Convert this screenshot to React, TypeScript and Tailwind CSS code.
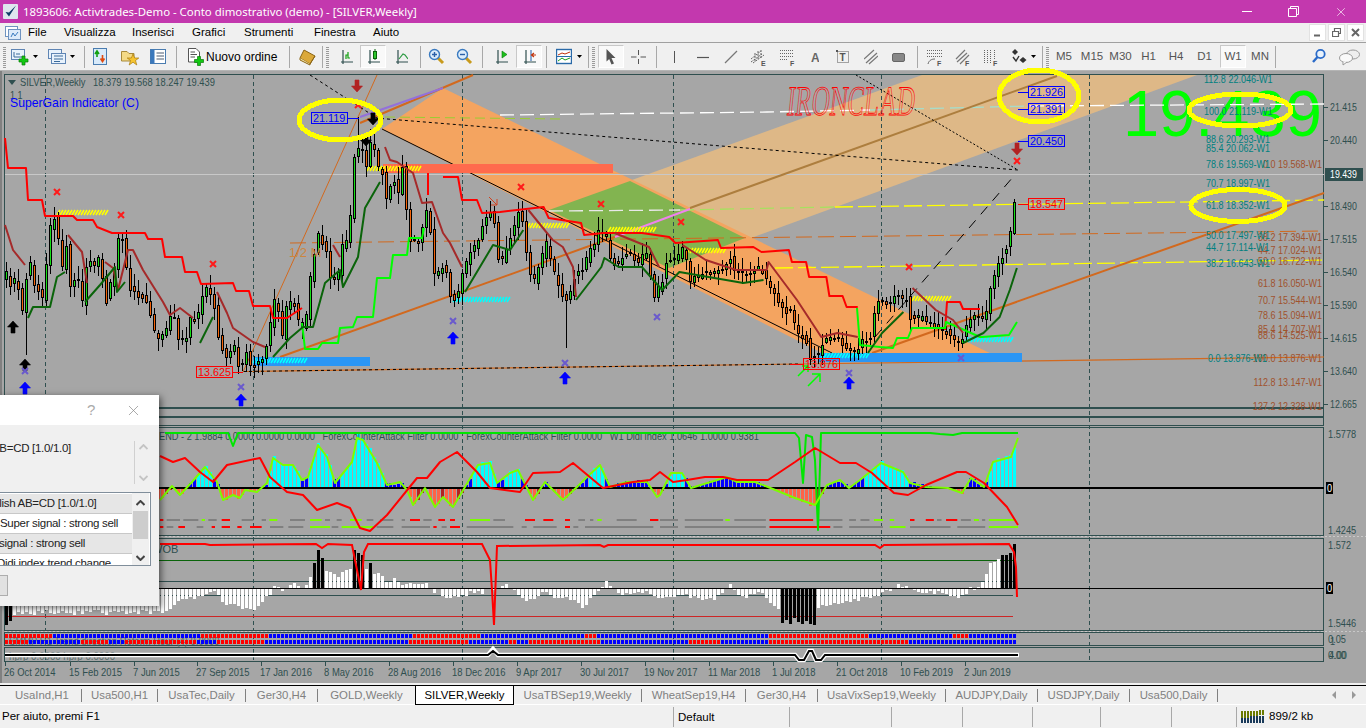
import { ReactNode } from "react";
import { X } from "lucide-react";

// ---- chart data helpers ----
let seed = 4711;
const rnd = () => {
  seed = (seed * 16807) % 2147483647;
  return seed / 2147483647;
};
const pts = (s: string) =>
  s
    .trim()
    .split(/\s+/)
    .map((p) => p.split(",").map(Number));
const at = (list: number[][], x: number) => {
  if (x <= list[0][0]) return list[0][1];
  for (let i = 1; i < list.length; i++) {
    if (x <= list[i][0]) {
      const [x0, y0] = list[i - 1];
      const [x1, y1] = list[i];
      return y0 + ((y1 - y0) * (x - x0)) / (x1 - x0);
    }
  }
  return list[list.length - 1][1];
};
// points right of 500 were read off a slightly squeezed crop
const fix = (s: string) =>
  pts(s)
    .map(([x, y]) => `${x > 500 ? 500 + (x - 500) * 1.0135 : x},${y}`)
    .join(" ");

const barXs = Array.from({ length: 253 }, (_, i) => 6 + i * 4);

const closePath = pts(`5,270 9,287 13,280 17,280 22,310 25,283 29,257 33,283 37,288 42,298 45,277 49,233 53,213 57,230 62,267 66,247 70,283 73,283 77,272 82,303 86,267 89,260 93,267 98,260 102,278 106,300 109,287 113,277 117,240 122,237 126,267 129,287 133,292 141,297 145,300 149,307 153,330 157,337 165,333 169,317 173,313 177,340 185,340 189,320 197,317 201,297 205,288 213,300 217,333 221,350 229,357 233,342 237,363 241,367 245,347 249,367 257,365 265,352 269,332 273,302 277,302 282,337 286,308 293,300 297,320 301,325 305,327 309,285 313,260 317,230 321,242 325,243 329,275 333,277 337,283 341,247 345,245 349,233 353,163 357,148 361,143 365,170 369,145 373,145 377,170 381,165 385,202 389,190 393,177 397,197 402,167 405,197 409,240 413,243 417,243 421,233 425,210 429,217 433,273 437,275 441,267 445,262 449,297 457,297 461,277 465,267 469,255 477,242 481,227 489,212 493,212 497,257 503,260 510,235 520,207 529,270 534,280 546,243 552,267 564,300 569,297 574,277 581,270 598,233 605,233 610,257 617,267 627,250 639,263 645,250 650,277 654,297 662,280 666,262 677,257 684,247 689,280 703,273 716,273 730,257 735,273 750,273 760,267 770,287 780,308 790,312 797,333 806,340 809,357 818,353 823,340 838,337 848,353 858,350 861,340 870,338 873,313 877,303 888,303 893,297 909,297 910,318 922,317 936,327 949,333 956,343 961,340 966,327 973,317 985,318 990,287 1000,260 1008,243 1013,212 1017,175`);

const candles = barXs.map((x, i) => {
  const c = Math.round(at(closePath, x) + (rnd() - 0.5) * 6);
  const o = i === 0 ? c + 8 : Math.round(at(closePath, x - 4) + (rnd() - 0.5) * 6);
  let hi = Math.round(Math.min(o, c) - 2 - rnd() * 11);
  let lo = Math.round(Math.max(o, c) + 2 + rnd() * 11);
  if (x === 26) lo = 355;
  if (x === 358) hi = 117;
  if (x === 566) lo = 348;
  if (x === 1018) hi = 171;
  return { x, o, c, hi, lo };
});

const limeLine = `160,500 172,486 180,495 192,482 205,467 217,482 223,500 233,495 240,498 245,490 257,492 267,483 273,458 283,465 293,465 302,480 308,477 318,445 327,457 335,483 352,462 357,438 363,440 377,463 387,485 400,482 407,490 413,505 425,488 435,507 443,497 453,507 462,492 478,465 490,463 497,483 510,473 518,470 533,500 545,482 563,500 577,487 587,477 600,465 610,487 627,482 647,482 657,497 660,495 671,473 682,473 691,488 727,477 737,482 755,482 768,487 795,498 815,505 827,485 840,480 849,488 860,480 881,463 903,472 910,483 926,487 948,488 962,493 971,478 984,487 993,462 1011,457 1018,438`;
const redLine = `160,456 173,462 185,458 200,472 213,482 227,465 260,458 270,477 287,492 303,495 317,510 337,503 350,508 360,528 370,531 387,515 417,478 427,478 440,462 457,452 477,472 490,488 520,492 533,473 560,472 573,463 603,488 633,482 650,480 660,472 673,482 687,480 705,477 723,477 737,480 768,480 795,462 815,448 840,463 856,463 872,473 894,493 908,495 926,485 957,472 966,472 984,483 1007,507 1018,525`;
const limeList = pts(limeLine);

const macdBars = barXs.map((x, i) => {
  const h = 487 - at(limeList, x);
  const prev = 487 - at(limeList, x - 4);
  const v = Math.round(h * 1.05 + (rnd() - 0.5) * 3);
  const color = v >= 0 ? (v > 9 ? "#00ffff" : "#0000ff") : h > prev + 2.5 ? "#b22222" : "#ff6347";
  return { x, v: i < 38 ? 0 : v, color };
});

const volPath = pts(`4,-25 160,-24 170,-22 180,-10 195,-12 205,-8 215,-4 225,-15 240,-20 255,-20 265,-12 272,-3 276,6 282,-5 288,3 296,4 304,2 308,5 316,18 330,18 336,12 345,16 360,18 375,15 385,8 395,8 405,3 420,2 425,6 430,-2 440,-4 450,-12 460,-8 470,-4 480,-5 490,-1 495,-2 505,3 515,-3 525,-15 535,-8 545,-4 555,-12 565,-10 575,-15 585,-20 590,-10 600,-2 605,8 613,-1 620,-8 630,-5 640,-3 650,-5 660,-14 665,-10 680,-5 690,-10 700,-10 710,-12 720,-8 730,3 740,-10 750,-8 760,-3 770,-15 778,-22 820,-20 835,-15 850,-14 870,-10 885,-3 900,3 912,-1 925,-5 945,-5 955,-10 965,-4 975,1 985,9 990,25 998,30`);
const blackBars: Record<number, number> = { 6: -37, 10: -33, 314: 25, 318: 38, 322: 30, 354: 38, 358: 35, 362: 33, 370: 25, 1002: 33, 1006: 33, 1010: 35, 1014: 44 };
const volBars = barXs.map((x) => {
  if (blackBars[x]) return { x, v: blackBars[x], black: true };
  if (x >= 782 && x <= 814) return { x, v: Math.round(-30 - rnd() * 8), black: true };
  return { x, v: Math.round(at(volPath, x) + (rnd() - 0.5) * 5), black: false };
});

const rowTop = "4,r 52,b 200,r 268,b 411,r 479,b 585,r 597,b 768,r 870,b 953,r 970,b";
const rowBottom = "4,r 27,b 80,r 108,b 125,r 195,b 215,r 263,b 407,r 467,b 507,r 517,b 527,r 600,b 687,r 722,b 768,r 907,b 964,b";
const blockColor = (row: string, x: number) => {
  const parts = row.split(" ").map((p) => p.split(","));
  let c = "r";
  parts.forEach(([px, pc]) => {
    if (x >= Number(px)) c = pc;
  });
  return c === "r" ? "#ff0000" : "#0000ff";
};

// indicator strips: [from, to, colour] taken from two crops with own offsets
const strip = (s: string, scale: number, off: number) =>
  s.split(" ").map((p) => {
    const [a, b, c] = p.split(",");
    return { a: Number(a) / scale + off, b: Number(b) / scale + off, c: c === "r" ? "#ff0000" : c === "l" ? "#7cfc00" : "#808080" };
  });
const stripA = [
  ...strip("0,10,r 20,60,g 70,115,g 125,135,l 145,170,g 185,210,r 245,280,g 305,318,g 328,352,l 390,435,g 450,485,l 495,510,g 530,545,g 570,605,l 620,640,g 660,700,g 725,735,g 750,780,r 790,815,g 835,855,r 870,885,r 930,990,l 1000,1035,g 1095,1125,r 1150,1180,r 1215,1230,r 1255,1275,g 1290,1300,g 1312,1325,l 1370,1430,g 1470,1495,r", 3, 160),
  ...strip("0,40,g 55,140,g 145,155,l 165,235,g 243,340,r 350,405,g 420,435,g 445,465,g 475,495,l 510,520,l 555,565,r 590,608,r 615,625,g 635,660,r 668,690,g 697,708,l 715,722,g 730,790,l", 2.22, 660),
];
const stripB = [
  ...strip("0,10,r 20,40,g 55,75,r 110,130,g 155,165,r 185,210,r 232,245,r 270,305,r 330,370,g 385,430,g 450,510,l 515,535,g 545,640,l 650,700,g 725,810,g 820,830,r 845,860,g 870,900,r 920,1060,g 1085,1100,g 1120,1190,g 1215,1230,r 1240,1255,g 1275,1480,g", 3, 160),
  ...strip("0,40,g 55,235,g 243,378,r 385,405,g 420,495,g 510,545,l 555,645,g 660,722,g 730,795,l", 2.22, 660),
];

const fibLeft = [
  ["112.8 22.046-W1", 1204, 83],
  ["100.0 21.119-W1", 1204, 115],
  ["88.6 20.293-W1", 1206, 143],
  ["85.4 20.062-W1", 1206, 152],
  ["78.6 19.569-W1", 1206, 168],
  ["70.7 18.997-W1", 1206, 187],
  ["61.8 18.352-W1", 1206, 209],
  ["50.0 17.497-W1", 1206, 239],
  ["44.7 17.114-W1", 1206, 251],
  ["38.2 16.643-W1", 1206, 267],
  ["0.0 13.876-W1", 1208, 362],
] as const;
const fibRight = [
  ["0.0 19.568-W1", 168],
  ["38.2 17.394-W1", 241],
  ["44.7 17.024-W1", 254],
  ["50.0 16.722-W1", 265],
  ["61.8 16.050-W1", 287],
  ["70.7 15.544-W1", 304],
  ["78.6 15.094-W1", 319],
  ["85.4 14.707-W1", 333],
  ["88.6 14.525-W1", 339],
  ["100.0 13.876-W1", 362],
  ["112.8 13.147-W1", 386],
  ["127.2 12.328-W1", 410],
] as const;
const priceAxis = [
  ["21.415", 107],
  ["20.440", 140],
  ["18.490", 206],
  ["17.515", 239],
  ["16.540", 272],
  ["15.590", 305],
  ["14.615", 338],
  ["13.640", 371],
  ["12.665", 404],
] as const;
const dates = [
  ["26 Oct 2014", 4],
  ["15 Feb 2015", 69],
  ["7 Jun 2015", 133],
  ["27 Sep 2015", 196],
  ["17 Jan 2016", 260],
  ["8 May 2016", 324],
  ["28 Aug 2016", 388],
  ["18 Dec 2016", 452],
  ["9 Apr 2017", 516],
  ["30 Jul 2017", 580],
  ["19 Nov 2017", 644],
  ["11 Mar 2018", 708],
  ["1 Jul 2018", 772],
  ["21 Oct 2018", 836],
  ["10 Feb 2019", 900],
  ["2 Jun 2019", 964],
] as const;
const grid = [45, 253, 462, 673, 881, 1089];

const SLATE = "#2f4f4f";

function Tx({ x, y, s = 0.84, size = 11, fill = SLATE, anchor, children }: { x: number; y: number; s?: number; size?: number; fill?: string; anchor?: "end"; children: ReactNode }) {
  return (
    <text transform={`translate(${x} ${y}) scale(${s} 1)`} fontSize={size} fill={fill} textAnchor={anchor}>
      {children}
    </text>
  );
}

function Arrow({ x, y, color, down = false }: { x: number; y: number; color: string; down?: boolean }) {
  return (
    <path
      d="M0 -6 L5.5 0 L2 0 L2 6 L-2 6 L-2 0 L-5.5 0 Z"
      fill={color}
      stroke={color}
      strokeWidth="0.6"
      transform={`translate(${x} ${y}) ${down ? "rotate(180)" : ""}`}
    />
  );
}

function Cross({ x, y, color }: { x: number; y: number; color: string }) {
  return <path d={`M${x - 3} ${y - 3}L${x + 3} ${y + 3}M${x + 3} ${y - 3}L${x - 3} ${y + 3}`} stroke={color} strokeWidth="2" />;
}

function Hatch({ from, to, y, color }: { from: number; to: number; y: number; color: string }) {
  let d = "";
  for (let x = from; x < to; x += 3) d += `M${x} ${y + 5}L${x + 3} ${y}`;
  return <path d={d} stroke={color} strokeWidth="1.6" fill="none" />;
}

function PriceBox({ x, y, w, label, color, lineFrom, lineTo }: { x: number; y: number; w: number; label: string; color: string; lineFrom: number; lineTo: number }) {
  return (
    <g>
      <path d={`M${lineFrom} ${y + 6.5}H${lineTo}`} stroke={color} />
      <rect x={x + 0.5} y={y + 0.5} width={w} height={11} fill="none" stroke={color} />
      <Tx x={x + 2} y={y + 10} s={0.94} size={11.5} fill={color}>
        {label}
      </Tx>
    </g>
  );
}

function Chart() {
  return (
    <svg className="relative block overflow-visible" width="1366" height="612" viewBox="0 71 1366 612">
      <rect x="0" y="71" width="1366" height="612" fill="#a6a6a6" />
      <rect x="0" y="71" width="2" height="612" fill="#808080" />

      {/* channels */}
      <polygon points="549,210 922,75 1197,75 669,268" fill="#deb887" />
      <polygon points="382,129 443,88 1000,358 832,358" fill="#f4a460" />
      <polygon points="549,210 630,181 745,238 669,268" fill="#82b450" />

      {/* grid */}
      {grid.map((x) => (
        <path key={x} d={`M${x + 0.5} 75V660`} stroke={SLATE} strokeDasharray="4 3" />
      ))}

      {/* pane frames */}
      <g fill="none" stroke={SLATE}>
        <rect x="4.5" y="74.5" width="1319" height="333" />
        <rect x="4.5" y="408.5" width="1319" height="8" />
        <rect x="4.5" y="417.5" width="1319" height="8" />
        <rect x="4.5" y="427.5" width="1319" height="108" />
        <rect x="4.5" y="538.5" width="1319" height="92" />
        <rect x="4.5" y="632.5" width="1319" height="13" />
        <rect x="4.5" y="647.5" width="1319" height="14" />
      </g>
      <path d="M5 536.5H1366M5 631.5H1366" stroke="#c8c8c8" strokeDasharray="2 2" />

      {/* big price */}
      <text x="1123" y="136" fontSize="65" fill="#00ff00">
        19.439
      </text>

      {/* levels */}
      <path d="M5 174.5H1324" stroke="#c8c8c8" />
      <path d="M500 115L767 112L870 110" stroke="#fff" strokeWidth="1.3" strokeDasharray="14 6" fill="none" />
      <path d="M870 110L1030 106" stroke="#a8dcc8" strokeWidth="1.3" strokeDasharray="14 6" fill="none" />
      <path d="M1030 106L1324 104" stroke="#fff" strokeWidth="1.3" strokeDasharray="14 6" fill="none" />
      <path d="M385 117L560 119" stroke="#9acd32" strokeDasharray="10 5" fill="none" />
      <path d="M549 211L680 210" stroke="#e8e8e8" strokeWidth="1.3" strokeDasharray="14 6" fill="none" />
      <path d="M680 210L835 207" stroke="#a8e060" strokeWidth="1.3" strokeDasharray="14 6" fill="none" />
      <path d="M835 207L1324 200" stroke="#ffff00" strokeWidth="1.3" strokeDasharray="18 5" fill="none" />
      <path d="M775 268L1324 260" stroke="#ffff00" strokeWidth="1.3" strokeDasharray="18 5" fill="none" />
      <path d="M290 243L1324 231" stroke="#d2691e" strokeDasharray="16 6" fill="none" />
      <path d="M243 371.5L800 364L1324 357" stroke="#d2691e" fill="none" strokeWidth="1.2" />
      <path d="M243 371.5L800 364" stroke="#000" fill="none" strokeDasharray="3 3" />

      {/* trend lines */}
      <path d="M243 372L377 75" stroke="#d2691e" />
      <path d="M360 123L473 75" stroke="#d2691e" strokeWidth="2" />
      <path d="M360 117L443 88" stroke="#9370db" strokeWidth="2" />
      <path d="M280 357L620 235" stroke="#d2691e" strokeWidth="2" />
      <path d="M615 237L690 209" stroke="#ee82ee" strokeWidth="2" />
      <path d="M690 208L1057 76" stroke="#ad7e3e" strokeWidth="2" />
      <path d="M872 353L1324 193" stroke="#d2691e" strokeWidth="2" />
      <path d="M382 129L832 353" stroke="#000" />
      <path d="M310 75L380 120" stroke="#000" strokeDasharray="3 3" />
      <path d="M375 118L1018 170" stroke="#000" strokeDasharray="3 3" />
      <path d="M856 75L1018 170" stroke="#000" strokeDasharray="2 2" />
      <path d="M875 337L1013 177" stroke="#000" strokeDasharray="10 8" />

      {/* bars */}
      <rect x="383" y="164" width="230" height="9" fill="#ff6a4d" />
      <rect x="253" y="357" width="117" height="9" fill="#2a96f5" />
      <rect x="818" y="353" width="204" height="9" fill="#2a96f5" />
      <Hatch from={57} to={108} y={210} color="#ffff00" />
      <Hatch from={367} to={420} y={166} color="#ffff00" />
      <Hatch from={527} to={568} y={223} color="#ffff00" />
      <Hatch from={608} to={655} y={227} color="#ffff00" />
      <Hatch from={687} to={726} y={248} color="#ffff00" />
      <Hatch from={912} to={951} y={296} color="#ffff00" />
      <Hatch from={253} to={307} y={358} color="#00ffff" />
      <Hatch from={453} to={510} y={297} color="#00ffff" />
      <Hatch from={821} to={868} y={353} color="#00ffff" />
      <Hatch from={965} to={1012} y={337} color="#00ffff" />

      {/* candles */}
      <g shapeRendering="crispEdges">
        {candles.map((k) => (
          <g key={k.x}>
            <path d={`M${k.x + 0.5} ${k.hi}V${k.lo}`} stroke="#000" />
            <rect
              x={k.x - 0.5}
              y={Math.min(k.o, k.c) + 0.5}
              width="2"
              height={Math.max(Math.abs(k.o - k.c), 1)}
              fill={k.c < k.o ? "#18e018" : "#f4640a"}
              stroke="#000"
            />
          </g>
        ))}
      </g>

      {/* overlay lines */}
      <g fill="none" strokeLinejoin="round">
        <polyline
          stroke="#ff0000"
          strokeWidth="2"
          points={fix(
            "5,138 8,168 26,168 28,200 42,200 45,216 73,216 77,220 93,220 97,227 112,233 145,233 148,239 162,239 165,257 182,257 185,272 197,272 201,284 233,283 236,291 249,291 253,306 270,306 273,318 287,318 302,308"
          )}
        />
        <polyline stroke="#ff0000" strokeWidth="2" points="428,173 428,195" />
        <polyline stroke="#ff0000" strokeWidth="2" points={fix("443,177 458,177 462,200 477,200 482,213 500,212 543,207 548,218 580,223 583,235 602,233 640,233 667,237 673,243 715,240 718,248 750,247 758,252 785,250 788,262 802,262 805,277 822,277 825,296 838,296 842,307 853,307")} />
        <polyline stroke="#ff0000" strokeWidth="2" points="945,330 947,302 960,302 963,309 980,309" />
        <polyline
          stroke="#00ff00"
          strokeWidth="2"
          points="302,323 305,349 318,349 322,343 338,343 340,328 353,327 357,317 373,317 377,278 390,278 393,255 407,255 409,238 422,238 424,228"
        />
        <polyline stroke="#00ff00" strokeWidth="2" points="857,308 860,345 880,347 893,348 897,338 908,338 912,328 945,328 946,322 980,337 982,337 1009,335 1017,322" />
        <polyline stroke="#a52a2a" strokeWidth="2" points="5,225 13,250 25,265" />
        <polyline stroke="#a52a2a" strokeWidth="2" points="68,235 82,252 87,283" />
        <polyline stroke="#a52a2a" strokeWidth="2" points="105,262 113,268 118,290 128,250 133,250 143,270 163,302 170,315 180,308 193,318" />
        <polyline stroke="#a52a2a" strokeWidth="2" points="217,292 227,313 233,328 253,342 265,347" />
        <polyline stroke="#a52a2a" strokeWidth="2" points="333,245 340,257" />
        <polyline stroke="#a52a2a" strokeWidth="2" points={fix("385,147 390,160 397,162 413,173 422,203 432,202 443,233 450,243 462,267")} />
        <polyline stroke="#a52a2a" strokeWidth="2" points={fix("528,210 552,240 562,247 572,267 575,297")} />
        <polyline stroke="#a52a2a" strokeWidth="2" points={fix("613,233 647,247 657,267")} />
        <polyline stroke="#a52a2a" strokeWidth="2" points={fix("680,245 703,260 733,270 763,270 765,262 793,300 817,337 833,333 853,337")} />
        <polyline stroke="#a52a2a" strokeWidth="2" points={fix("907,288 930,310 947,320 957,333")} />
        <polyline stroke="#0a640a" strokeWidth="2" points="28,318 33,307 50,307 57,277 65,272" />
        <polyline stroke="#0a640a" strokeWidth="2" points="85,302 100,285 115,267 117,292 125,282" />
        <polyline stroke="#0a640a" strokeWidth="2" points="200,343 213,317" />
        <polyline stroke="#0a640a" strokeWidth="2" points="273,357 290,338 303,327 313,327 325,283 340,270 343,287 358,257 365,208 380,182" />
        <polyline stroke="#0a640a" strokeWidth="2" points={fix("465,292 493,245 510,250 523,230")} />
        <polyline stroke="#0a640a" strokeWidth="2" points={fix("575,300 600,267 603,258 617,267 640,267 660,290 677,272 723,280 740,283 760,280")} />
        <polyline stroke="#0a640a" strokeWidth="2" points={fix("863,353 877,333 898,312")} />
        <polyline stroke="#0a640a" strokeWidth="2" points={fix("957,343 977,333 993,317 1003,290 1010,268")} />
      </g>

      {/* signals */}
      <Arrow x={357} y={86} color="#b22222" down />
      <Arrow x={373} y={119} color="#000" down />
      <Arrow x={366} y={140} color="#000" down />
      <Arrow x={1017} y={149} color="#b22222" down />
      <Arrow x={13} y={327} color="#000" />
      <Arrow x={25} y={365} color="#000" />
      <Arrow x={25} y={388} color="#0000ff" />
      <Arrow x={241} y={400} color="#0000ff" />
      <Arrow x={453} y={338} color="#0000ff" />
      <Arrow x={565} y={378} color="#0000ff" />
      <Arrow x={849} y={383} color="#0000ff" />
      {[[57, 192], [121, 215], [213, 264], [358, 105], [521, 187], [601, 204], [681, 222], [909, 267], [1017, 161]].map(([x, y]) => (
        <Cross key={x} x={x} y={y} color="#ff1a1a" />
      ))}
      {[[25, 371], [241, 387], [453, 321], [565, 363], [657, 317], [849, 373], [961, 358]].map(([x, y]) => (
        <Cross key={x} x={x} y={y} color="#6a5acd" />
      ))}
      <path d="M798 376L808 366M802 366H808V372M808 386L820 374M812 374H820V382" stroke="#00ff00" strokeWidth="1.5" fill="none" />
      <path d="M489 197L497 205M491 205H497V199" stroke="#d2401e" fill="none" />

      <Tx x={289} y={257} s={1} size={13} fill="#cd853f">
        1/2 M
      </Tx>
      <text
        transform="translate(786 115) skewX(-6)"
        fontFamily="'Liberation Serif', serif"
        fontSize="42"
        fill="none"
        stroke="#ff0000"
        strokeWidth="0.8"
        textLength="128"
        lengthAdjust="spacingAndGlyphs"
      >
        IRONCLAD
      </text>

      {/* top texts */}
      <path d="M8 80H16L12 85Z" fill={SLATE} />
      <Tx x={20} y={86} s={0.85}>
        SILVER,Weekly
      </Tx>
      <Tx x={93} y={86} s={0.85}>
        18.379 19.568 18.247 19.439
      </Tx>
      <Tx x={10} y={99} s={0.9} size={10}>
        1  1
      </Tx>
      <text x="10" y="107" fontSize="13" fill="#0000ff" textLength="129" lengthAdjust="spacingAndGlyphs">
        SuperGain Indicator (C)
      </text>

      {/* fib labels */}
      {fibRight.map(([t, y]) => (
        <Tx key={t} x={1322} y={y} anchor="end" fill="#a0522d" s={0.82}>
          {t}
        </Tx>
      ))}
      {fibLeft.map(([t, x, y]) => (
        <Tx key={t} x={x} y={y} fill="#008080" s={0.82}>
          {t}
        </Tx>
      ))}

      <PriceBox x={311} y={112} w={36} label="21.119" color="#0000ff" lineFrom={348} lineTo={359} />
      <PriceBox x={1028} y={86} w={36} label="21.926" color="#0000ff" lineFrom={1018} lineTo={1028} />
      <PriceBox x={1028} y={103} w={36} label="21.391" color="#0000ff" lineFrom={1018} lineTo={1028} />
      <PriceBox x={1028} y={135} w={36} label="20.450" color="#0000ff" lineFrom={1018} lineTo={1028} />
      <PriceBox x={1028} y={198} w={36} label="18.547" color="#ff0000" lineFrom={1018} lineTo={1028} />
      <PriceBox x={196} y={366} w={36} label="13.625" color="#ff0000" lineFrom={232} lineTo={243} />
      <PriceBox x={803} y={358} w={36} label="13.876" color="#ff0000" lineFrom={790} lineTo={803} />

      {/* MACD pane */}
      <g shapeRendering="crispEdges">
        {macdBars.map((b) => (
          <rect key={b.x} x={b.x - 1} y={b.v >= 0 ? 487 - b.v : 487} width="3" height={Math.abs(b.v)} fill={b.color} />
        ))}
      </g>
      <path d="M5 488H1324" stroke="#000" strokeWidth="2" />
      {stripA.map((s, i) => (
        <path key={i} d={`M${s.a} 520H${s.b}`} stroke={s.c} strokeWidth="2" />
      ))}
      {stripB.map((s, i) => (
        <path key={i} d={`M${s.a} 527H${s.b}`} stroke={s.c} strokeWidth="2" />
      ))}
      <text x="159" y="440" fontSize="11" fill={SLATE} textLength="600" lengthAdjust="spacingAndGlyphs" xmlSpace="preserve">
        END - 2 1.9884 0.0000 0.0000 0.0000   ForexCounterAttack Filter 0.0000   ForexCounterAttack Filter 0.0000   W1 Didi index 1.0646 1.0000 0.9381
      </text>
      <g fill="none" strokeLinejoin="round">
        <polyline stroke="#00e600" strokeWidth="2" points="165,433 228,433 233,446 238,433 795,433 799,438 803,483 806,435 812,437 815,460 818,530 821,433 930,433 940,434 953,435 962,433 1018,433" />
        <polyline stroke="#7cfc00" strokeWidth="2" points={limeLine} />
        <polyline stroke="#ff0000" strokeWidth="2" points={redLine} />
      </g>

      {/* volume pane */}
      <path d="M5 560.5H1013" stroke="#0a640a" />
      <path d="M5 581.5H1013M5 595.5H1013" stroke={SLATE} />
      <path d="M5 616.5H1013" stroke="#cd2626" />
      <g shapeRendering="crispEdges">
        {volBars.map((b) => (
          <rect key={b.x} x={b.x - 1} y={b.v >= 0 ? 588 - b.v : 588} width="3" height={Math.abs(b.v)} fill={b.black ? "#000" : "#fff"} />
        ))}
      </g>
      <path d="M5 588.5H1324" stroke="#000" />
      <polyline
        fill="none"
        stroke="#ff0000"
        strokeWidth="2"
        points="160,544 205,544 210,545 316,544 322,548 328,544 352,545 354,555 361,590 364,552 368,544 482,544 490,560 492,590 494,625 497,546 600,545 604,547 608,545 875,545 880,548 884,545 1009,544 1014,552 1016,567 1017,597"
      />
      <text x="152" y="553" fontSize="11" fill={SLATE}>
        WOB
      </text>

      {/* signal rows */}
      <Tx x={9} y={645} s={0.86} fill="#5a6a6a">
        SMMP H1 Trend direction Reform Hour (4) 0.0000
      </Tx>
      <g shapeRendering="crispEdges">
        {barXs.map((x) => (
          <g key={x}>
            <rect x={x - 1} y="634" width="3" height="4" fill={blockColor(rowTop, x)} />
            <rect x={x - 1} y="640" width="3" height="4" fill={blockColor(rowBottom, x)} />
          </g>
        ))}
      </g>

      {/* last pane */}
      <Tx x={9} y={660} s={0.88} fill="#5a6a6a">
        hprp 0.0000  hprp 0.0000
      </Tx>
      <path
        d="M5 655H488L493 649L498 655H795L799 660H804L809 651H812L816 660H821L825 655H1019"
        fill="none"
        stroke="#fff"
        strokeWidth="4.5"
      />
      <path
        d="M5 655H488L493 651L498 655H795L799 660H804L809 651H812L816 660H821L825 655H1018"
        fill="none"
        stroke="#000"
        strokeWidth="2"
      />

      {/* axes */}
      {priceAxis.map(([t, y]) => (
        <g key={t}>
          <path d={`M1324 ${y + 0.5}H1328`} stroke={SLATE} />
          <Tx x={1330} y={y + 4} s={0.8}>
            {t}
          </Tx>
        </g>
      ))}
      <rect x="1325" y="168" width="38" height="13" fill={SLATE} />
      <Tx x={1330} y={178} s={0.8} fill="#fff">
        19.439
      </Tx>
      <Tx x={1328} y={438} s={0.84}>
        1.5778
      </Tx>
      <Tx x={1328} y={534} s={0.84}>
        1.4245
      </Tx>
      <Tx x={1328} y={549} s={0.84}>
        1.572
      </Tx>
      <Tx x={1328} y={627} s={0.84}>
        1.5446
      </Tx>
      {[488, 588].map((y) => (
        <g key={y}>
          <rect x="1326" y={y - 6} width="7" height="12" fill="#000" />
          <Tx x={1327} y={y + 4} fill="#fff" s={0.84}>
            0
          </Tx>
        </g>
      ))}
      <Tx x={1328} y={643} s={0.84}>
        0.05
      </Tx>
      <Tx x={1330} y={645} s={0.84}>
        1
      </Tx>
      <Tx x={1328} y={659} s={0.84}>
        0.00
      </Tx>
      <Tx x={1329} y={659} s={0.84}>
        4.00
      </Tx>
      {dates.map(([t, x]) => (
        <g key={t}>
          <path d={`M${x + 1.5} 662V666`} stroke={SLATE} />
          <Tx x={x} y={676} s={0.86}>
            {t}
          </Tx>
        </g>
      ))}

      {/* hand drawn highlights */}
      <g fill="none" stroke="#ffff00" strokeWidth="5" shapeRendering="crispEdges">
        <ellipse cx="340" cy="120" rx="41" ry="20" />
        <ellipse cx="1039" cy="96" rx="40" ry="26" />
        <ellipse cx="1240" cy="110" rx="51" ry="16" />
        <ellipse cx="1238" cy="205.5" rx="47" ry="16" />
      </g>
    </svg>
  );
}

// ---- toolbar icons ----
function Ico({ w, h = 18, className = "", children }: { w: number; h?: number; className?: string; children: ReactNode }) {
  return (
    <svg width={w} height={h} viewBox={`0 0 ${w} ${h}`} className={`shrink-0 ${className}`} fill="none">
      {children}
    </svg>
  );
}
const Plus = ({ x, y }: { x: number; y: number }) => (
  <path d={`M${x + 3} ${y}h3v3h3v3h-3v3h-3v-3h-3v-3h3z`} fill="#12c812" stroke="#0a7a0a" strokeWidth="0.7" />
);
const Caret = ({ className = "" }: { className?: string }) => (
  <svg width="5" height="3" viewBox="0 0 5 3" className={`shrink-0 ${className}`}>
    <path d="M0 0H5L2.5 3Z" fill="#000" />
  </svg>
);
const Sep = ({ className = "" }: { className?: string }) => <div className={`w-px h-[22px] bg-[#a8a8a8] shrink-0 ${className}`} />;
const Grip = ({ className = "" }: { className?: string }) => (
  <div className={`w-[3px] h-[22px] shrink-0 bg-[repeating-linear-gradient(0deg,#9a9a9a_0,#9a9a9a_1px,#f0f0f0_1px,#f0f0f0_2px)] ${className}`} />
);
const Active = ({ className = "", children }: { className?: string; children: ReactNode }) => (
  <div className={`w-[26px] h-[23px] shrink-0 flex items-center justify-center bg-[#f9f9f9] border border-[#c8c8c8] border-r-white border-b-white ${className}`}>
    {children}
  </div>
);
const Axes = () => <path d="M4 2V14H14M2 14H4M4 14V16" stroke="#2f4f4f" strokeWidth="1.2" />;
const Magnifier = ({ minus = false }: { minus?: boolean }) => (
  <>
    <path d="M10 10L15 15" stroke="#c89a1c" strokeWidth="3" />
    <circle cx="6.5" cy="6.5" r="5" fill="#dcecfa" stroke="#3a7ac0" strokeWidth="1.4" />
    <path d={minus ? "M4 6.5H9" : "M4 6.5H9M6.5 4V9"} stroke="#2a60a8" strokeWidth="1.4" />
  </>
);

const menus = [
  ["File", "w-[36px]"],
  ["Visualizza", "w-[68px]"],
  ["Inserisci", "w-[60px]"],
  ["Grafici", "w-[52px]"],
  ["Strumenti", "w-[70px]"],
  ["Finestra", "w-[59px]"],
  ["Aiuto", "w-[50px]"],
];
const tabs = [
  ["UsaInd,H1", "w-[79px]"],
  ["Usa500,H1", "w-[76px]"],
  ["UsaTec,Daily", "w-[88px]"],
  ["Ger30,H4", "w-[72px]"],
  ["GOLD,Weekly", "w-[97px]"],
  ["SILVER,Weekly", "w-[99px]"],
  ["UsaTBSep19,Weekly", "w-[128px]"],
  ["WheatSep19,H4", "w-[104px]"],
  ["Ger30,H4", "w-[72px]"],
  ["UsaVixSep19,Weekly", "w-[128px]"],
  ["AUDJPY,Daily", "w-[92px]"],
  ["USDJPY,Daily", "w-[92px]"],
  ["Usa500,Daily", "w-[88px]"],
];
const periods = [
  ["M5", "w-[28px]"],
  ["M15", "w-[28px]"],
  ["M30", "w-[29px]"],
  ["H1", "w-[27px]"],
  ["H4", "w-[28px]"],
  ["D1", "w-[29px]"],
];
const statusCells = ["w-[116px]", "w-[102px]", "w-[71px]", "w-[70px]", "w-[68px]", "w-[71px]", "w-[65px]"];

function TitleBar() {
  return (
    <div className="h-[23px] bg-[#c338ae] flex items-center shrink-0 text-white">
      <svg width="15" height="15" viewBox="0 0 15 15" className="ml-[3px] shrink-0">
        <rect width="15" height="15" rx="1" fill="#dfe6ee" />
        <path d="M2.5 8L6 12.5L13 1.5L6 8.5Z" fill="#0d3a66" />
      </svg>
      <span className="ml-[5px] text-[11.4px] font-['Noto_Sans',sans-serif] whitespace-nowrap">
        1893606: Activtrades-Demo - Conto dimostrativo (demo) - [SILVER,Weekly]
      </span>
      <div className="ml-auto w-[10px] h-px bg-white mr-[36px]" />
      <svg width="11" height="11" viewBox="0 0 11 11" className="mr-[35px] shrink-0" fill="none" stroke="#fff">
        <path d="M0.5 2.5H8.5V10.5H0.5ZM2.5 2.5V0.5H10.5V8.5H8.5" />
      </svg>
      <X size={14} strokeWidth={1.1} className="mr-[18px] shrink-0" />
    </div>
  );
}

function MenuBar() {
  return (
    <div className="h-[20px] bg-[#f0f0f0] flex items-center shrink-0 text-[11.5px] text-black border-b border-[#a0a0a0]">
      <svg width="16" height="16" viewBox="0 0 16 16" className="ml-[5px] mr-[7px] shrink-0" fill="none">
        <rect x="0.5" y="1.5" width="12" height="10" fill="#fff" stroke="#6f93c0" />
        <rect x="3.5" y="4.5" width="12" height="10" fill="#dceafa" stroke="#6f93c0" />
        <path d="M6 12L8 8L10 11L13 7" stroke="#3a7ac0" />
      </svg>
      {menus.map(([m, w]) => (
        <span key={m} className={w}>
          {m}
        </span>
      ))}
      <div className="ml-auto flex gap-[2px] mr-[2px]">
        {["min", "restore", "close"].map((k) => (
          <div key={k} className="w-[17px] h-[17px] bg-white border border-[#e2e2e2] flex items-center justify-center">
            <svg width="9" height="9" viewBox="0 0 9 9" fill="none" stroke="#666" strokeWidth="1.2">
              {k === "min" && <path d="M1 7.5H7" strokeWidth="2" />}
              {k === "restore" && <path d="M0.5 3.5H6.5V8.5H0.5ZM2.5 3.5V0.5H8.5V5.5H6.5" />}
              {k === "close" && <path d="M1 1L8 8M8 1L1 8" strokeWidth="2" />}
            </svg>
          </div>
        ))}
      </div>
    </div>
  );
}

function ToolBar() {
  return (
    <div className="h-[28px] bg-[#f0f0f0] flex items-center shrink-0 border-b border-[#b4b4b4] text-[#444]">
      <Grip className="ml-[3px]" />
      <Ico w={18} className="ml-[5px]">
        <rect x="0.5" y="1.5" width="13" height="10" fill="#e8f2fc" stroke="#5f85b4" />
        <path d="M3 4V9H11M5 6H9" stroke="#3a6a9a" />
        <Plus x={8} y={8} />
      </Ico>
      <Caret className="ml-[4px]" />
      <Ico w={18} className="ml-[10px]">
        <rect x="0.5" y="1.5" width="13" height="9" fill="#e8f2fc" stroke="#5f85b4" />
        <rect x="3.5" y="5.5" width="14" height="10" fill="#e8f2fc" stroke="#5f85b4" />
        <path d="M6 8H15M6 11H15M6 13.5H12" stroke="#3a6a9a" />
      </Ico>
      <Caret className="ml-[4px]" />
      <Sep className="ml-[9px]" />
      <Ico w={14} className="ml-[8px]">
        <rect x="0.5" y="0.5" width="13" height="16" fill="#d8eafa" stroke="#4a7cb0" />
        <path d="M4 9V4M2 6L4 3L6 6" stroke="#10a010" strokeWidth="1.6" />
        <path d="M9.5 7V13M7.5 10.5L9.5 13.5L11.5 10.5" stroke="#e04a10" strokeWidth="1.6" />
      </Ico>
      <Ico w={18} className="ml-[14px]">
        <path d="M0.5 3.5H6L8 5.5H13V13H0.5Z" fill="#f4da86" stroke="#a88a3a" />
        <path d="M12 6L13.6 10H17.8L14.5 12.5L15.8 17L12 14.2L8.2 17L9.5 12.5L6.2 10H10.4Z" fill="#f6c430" stroke="#a87a10" strokeWidth="0.7" />
      </Ico>
      <Ico w={16} className="ml-[11px]">
        <rect x="0.5" y="1.5" width="15" height="14" fill="#fff" stroke="#4a7cb0" />
        <rect x="0.5" y="1.5" width="4" height="14" fill="#3a78bc" />
        <path d="M6.5 5H14M6.5 8H14M6.5 11H14" stroke="#4a5a70" />
      </Ico>
      <Sep className="ml-[10px]" />
      <Ico w={18} className="ml-[10px]">
        <path d="M1.5 0.5H9L12.5 4V14H1.5Z" fill="#fff" stroke="#555" />
        <path d="M3.5 4H8M3.5 6.5H10M3.5 9H8" stroke="#555" />
        <Plus x={7.5} y={8.5} />
      </Ico>
      <span className="ml-[1px] w-[74px] text-[12px] text-black whitespace-nowrap">Nuovo ordine</span>
      <Sep className="ml-[9px]" />
      <Ico w={17} className="ml-[9px]">
        <path d="M5 2L16 8L11 16L1 10Z" fill="#dba93a" stroke="#8a6414" />
        <path d="M1 10L1 12L11 17L11 16M11 16L16 8" stroke="#8a6414" fill="#f4e0a0" />
      </Ico>
      <Sep className="ml-[6px]" />
      <Grip className="ml-[3px]" />
      <Ico w={14} className="ml-[10px]">
        <Axes />
        <path d="M7 11V7H9M9 4V10H11" stroke="#10a010" strokeWidth="1.2" />
      </Ico>
      <Active className="ml-[7px]">
        <Ico w={14}>
          <Axes />
          <path d="M9 1V12" stroke="#0a640a" />
          <rect x="7.5" y="3.5" width="3" height="7" fill="#2ec62e" stroke="#0a640a" />
        </Ico>
      </Active>
      <Ico w={14} className="ml-[8px]">
        <Axes />
        <path d="M5 11L9 6L11 7L14 11" stroke="#2a9a40" strokeWidth="1.2" />
      </Ico>
      <Sep className="ml-[12px]" />
      <Ico w={17} className="ml-[7px]">
        <Magnifier />
      </Ico>
      <Ico w={17} className="ml-[11px]">
        <Magnifier minus />
      </Ico>
      <Sep className="ml-[9px]" />
      <Ico w={14} className="ml-[11px]">
        <Axes />
        <path d="M8 3V10L13 6.5Z" fill="#1cc01c" stroke="#0a7a0a" strokeWidth="0.6" />
      </Ico>
      <Active className="ml-[8px]">
        <Ico w={14}>
          <Axes />
          <path d="M9 2V13" stroke="#1c5aa8" />
          <path d="M14 7H10M12 5L9.5 7L12 9" stroke="#c0320a" strokeWidth="1.2" />
        </Ico>
      </Active>
      <Sep className="ml-[4px]" />
      <Ico w={16} className="ml-[9px]">
        <rect x="0.5" y="1.5" width="15" height="14" fill="#fff" stroke="#2a6aa8" strokeWidth="1.4" />
        <path d="M2 7L6 5L9 6L14 4" stroke="#c0320a" />
        <path d="M1 8.5H15" stroke="#2a6aa8" />
        <path d="M2 13L6 10L9 12L14 10" stroke="#18a018" />
      </Ico>
      <Caret className="ml-[5px]" />
      <Sep className="ml-[6px]" />
      <Grip className="ml-[3px]" />
      <Active className="ml-[3px]">
        <svg width="10" height="16" viewBox="0 0 10 16">
          <path d="M0.5 0L9.5 9H5.5L8 14.5L5.5 15.5L3.2 10L0.5 12.5Z" fill="#555" />
        </svg>
      </Active>
      <Ico w={15} className="ml-[7px]">
        <path d="M7.5 2V7M7.5 11V16M0 9H5.5M9.5 9H15" stroke="#555" />
      </Ico>
      <Sep className="ml-[10px]" />
      <Ico w={3} className="ml-[16px]">
        <path d="M1.5 3V15" stroke="#555" />
      </Ico>
      <Ico w={12} className="ml-[21px]">
        <path d="M0 9.5H12" stroke="#555" strokeWidth="1.2" />
      </Ico>
      <Ico w={14} className="ml-[15px]">
        <path d="M1 15L13 3" stroke="#777" strokeWidth="1.3" />
      </Ico>
      <Ico w={17} className="ml-[12px]">
        <path d="M1 11L11 3M1 14L12 6M3 15L14 7M5 5V13M8 3V12M11 2V11" stroke="#666" strokeDasharray="2 1" />
        <text x="11" y="18" fontSize="7" fontWeight="bold" fill="#555">E</text>
      </Ico>
      <Ico w={15} className="ml-[13px]">
        <path d="M0 2.5H13M0 5.5H13M0 8.5H13M0 11.5H8" stroke="#666" strokeDasharray="1 1" />
        <text x="10" y="18" fontSize="7" fontWeight="bold" fill="#555">F</text>
      </Ico>
      <Ico w={8} className="ml-[16px]">
        <text x="0" y="14" fontSize="12" fontWeight="bold" fill="#666">A</text>
      </Ico>
      <Ico w={13} className="ml-[17px]">
        <rect x="1.5" y="3.5" width="11" height="11" stroke="#555" strokeDasharray="1 1" />
        <rect x="0" y="2" width="2" height="2" fill="#555" />
        <text x="3.5" y="13" fontSize="10" fontWeight="bold" fill="#555">T</text>
      </Ico>
      <Ico w={14} className="ml-[15px]">
        <path d="M0 11L10 2M2 15L13 5M5 16L14 8" stroke="#777" strokeWidth="1.2" />
      </Ico>
      <Ico w={13} className="ml-[14px]">
        <rect x="0.5" y="5.5" width="12" height="8" rx="1.5" fill="#888" stroke="#666" />
      </Ico>
      <Sep className="ml-[12px]" />
      <Ico w={15} className="ml-[9px]">
        <path d="M0 2.5H15M0 5.5H15M0 8.5H15" stroke="#666" strokeDasharray="1 1" />
        <path d="M1 16C2 12 5 11 8 11" stroke="#666" />
        <text x="10" y="18" fontSize="7" fontWeight="bold" fill="#555">F</text>
      </Ico>
      <Ico w={15} className="ml-[13px]">
        <path d="M1 11L10 2M2 14L12 5M5 16L14 7" stroke="#777" strokeWidth="1.2" />
        <text x="10" y="18" fontSize="7" fontWeight="bold" fill="#555">F</text>
      </Ico>
      <Ico w={15} className="ml-[13px]">
        <path d="M1.5 2V15M4.5 2V15M7.5 2V15M11.5 2V11" stroke="#666" strokeDasharray="1 1" />
        <text x="10" y="18" fontSize="7" fontWeight="bold" fill="#555">F</text>
      </Ico>
      <Ico w={15} className="ml-[14px]">
        <path d="M3 1L6 4L3 7L0 4Z" fill="#333" />
        <path d="M1 9L4 13L7 8" stroke="#333" strokeWidth="1.4" />
        <path d="M11 9L14.5 12L11 15L7.5 12Z" fill="#333" />
      </Ico>
      <Caret className="ml-[4px]" />
      <Sep className="ml-[6px]" />
      <Grip className="ml-[3px]" />
      <div className="ml-px flex items-center">
        {periods.map(([p, w]) => (
          <span key={p} className={`${w} text-center text-[11.5px] text-[#555]`}>
            {p}
          </span>
        ))}
      </div>
      <Active className="ml-px text-[11.5px] text-[#555]">W1</Active>
      <span className="w-[28px] text-center text-[11.5px] text-[#555]">MN</span>
      <Sep className="ml-[1px]" />
      <Ico w={14} className="ml-[36px]">
        <circle cx="8.5" cy="6" r="4.2" stroke="#2a6ac8" strokeWidth="1.8" fill="#e8f2fc" />
        <path d="M5.5 9L1 14" stroke="#2a6ac8" strokeWidth="2.4" />
      </Ico>
      <Ico w={21} className="ml-[13px]">
        <ellipse cx="14" cy="6.5" rx="6.5" ry="4.5" fill="#eee" stroke="#999" />
        <ellipse cx="7" cy="10" rx="6.5" ry="4.5" fill="#fafafa" stroke="#999" />
        <path d="M4 14V17L8 14" fill="#fafafa" stroke="#999" />
      </Ico>
    </div>
  );
}

function Dialog() {
  return (
    <div className="absolute left-0 top-[324px] w-[159px] h-[211px] bg-[#f0f0f0] shadow-[2px_2px_7px_rgba(0,0,0,0.55)] flex flex-col text-[11.5px] tracking-[-0.3px] text-[#222] overflow-hidden">
      <div className="h-[30px] bg-white flex items-center shrink-0">
        <span className="ml-[87px] text-[15px] text-[#aaa]">?</span>
        <X size={17} strokeWidth={1} className="ml-[30px] text-[#888]" />
      </div>
      <div className="h-[67px] flex shrink-0">
        <div className="w-[134px] pt-[15px] overflow-hidden whitespace-nowrap">
          <span className="block -ml-[8px]">AB=CD [1.0/1.0]</span>
        </div>
        <div className="w-[17px] h-[43px] mt-[16px] border-l border-[#d0d0d0] flex flex-col items-center justify-between text-[#c4c4c4] py-[3px]">
          <svg width="9" height="6" viewBox="0 0 9 6" fill="none" stroke="currentColor" strokeWidth="1.8">
            <path d="M0.5 5L4.5 1L8.5 5" />
          </svg>
          <svg width="9" height="6" viewBox="0 0 9 6" fill="none" stroke="currentColor" strokeWidth="1.8">
            <path d="M0.5 1L4.5 5L8.5 1" />
          </svg>
        </div>
      </div>
      <div className="w-[151px] h-[74px] border border-l-0 border-[#808e9b] flex shrink-0 bg-white">
        <div className="w-[132px] overflow-hidden whitespace-nowrap pt-px">
          <div className="h-[20px] bg-[#e6e6e6] border-b border-[#c8c8c8] -ml-[4px] pl-px leading-[19px]">llish AB=CD [1.0/1.0]</div>
          <div className="h-[20px] border-b border-[#c8c8c8] leading-[19px]">Super signal : strong sell</div>
          <div className="h-[20px] bg-[#e6e6e6] border-b border-[#c8c8c8] -ml-[1px] leading-[19px]">signal : strong sell</div>
          <div className="h-[20px] -ml-[3px] leading-[19px]">Didi index trend change</div>
        </div>
        <div className="w-[17px] bg-[#f0f0f0] flex flex-col items-center text-[#444]">
          <svg width="9" height="6" viewBox="0 0 9 6" fill="none" stroke="currentColor" strokeWidth="2" className="mt-[7px]">
            <path d="M0.5 5L4.5 1L8.5 5" />
          </svg>
          <div className="w-[15px] h-[28px] bg-[#cdcdcd] mt-[5px]" />
          <svg width="9" height="6" viewBox="0 0 9 6" fill="none" stroke="currentColor" strokeWidth="2" className="mt-[16px]">
            <path d="M0.5 1L4.5 5L8.5 1" />
          </svg>
        </div>
      </div>
      <div className="w-[8px] h-[21px] mt-[9px] bg-[#e1e1e1] border border-l-0 border-[#adadad] shrink-0" />
    </div>
  );
}

function TabBar() {
  return (
    <div className="h-[22px] bg-[#f0f0f0] shrink-0 pt-[2px]">
      <div className="h-[20px] border-t border-black flex items-center pl-[3px] border-b-white border-b text-[11.4px] text-[#808080] whitespace-nowrap">
        {tabs.map(([t, w], i) =>
          t === "SILVER,Weekly" ? (
            <div key={t} className={`${w} h-[19px] -mb-px bg-white border-x border-b border-black text-black text-center leading-[18px]`}>
              {t}
            </div>
          ) : (
            <div key={t + i} className={`${w} h-[13px] leading-[13px] text-center ${i === 4 ? "" : "border-r border-[#808080]"}`}>
              {t}
            </div>
          )
        )}
        <svg width="26" height="9" viewBox="0 0 26 9" className="ml-auto mr-[8px]" fill="#999">
          <path d="M4 0V8L0 4ZM20 0V8L24 4Z" />
        </svg>
      </div>
    </div>
  );
}

function StatusBar() {
  return (
    <div className="h-[23px] bg-[#f0f0f0] flex items-center shrink-0 text-[11.5px] text-black">
      <span className="w-[673px] pl-[2px]">Per aiuto, premi F1</span>
      {statusCells.map((w, i) => (
        <div key={w + i} className={`${w} h-[20px] border-l border-[#a8a8a8] pl-[4px] leading-[20px]`}>
          {i === 0 ? "Default" : ""}
        </div>
      ))}
      <div className="h-[20px] border-l border-[#a8a8a8] pl-[4px] flex items-center gap-[4px]">
        <svg width="24" height="13" viewBox="0 0 24 13" className="shrink-0">
          {[0, 3, 6, 9, 12, 15, 18, 21].map((x, i) => (
            <g key={x}>
              <rect x={x} y={i > 5 ? 0 : 1} width="2" height={i > 2 ? 5 : 7} fill="#6b7a00" />
              <rect x={x} y={i > 2 ? 6 : 8} width="2" height={i > 2 ? 7 : 5} fill="#1a3a5a" />
            </g>
          ))}
        </svg>
        <span>899/2 kb</span>
      </div>
    </div>
  );
}

export default function App() {
  return (
    <div className="w-[1366px] h-[728px] flex flex-col overflow-hidden bg-[#f0f0f0] font-['Liberation_Sans',Arial,sans-serif]">
      <TitleBar />
      <MenuBar />
      <ToolBar />
      <div className="relative h-[612px] shrink-0">
        <Chart />
        <Dialog />
      </div>
      <TabBar />
      <StatusBar />
    </div>
  );
}
